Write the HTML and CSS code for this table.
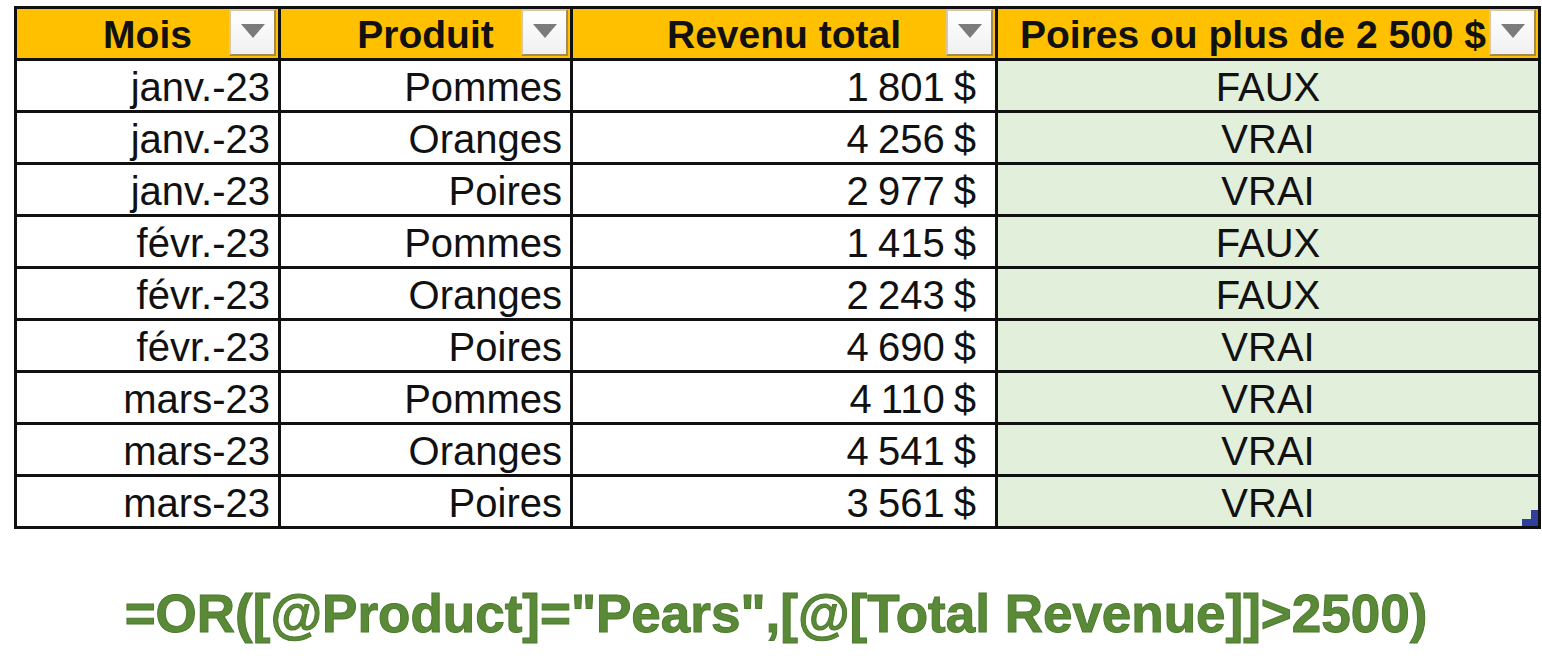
FILE: index.html
```html
<!DOCTYPE html>
<html lang="fr">
<head>
<meta charset="utf-8">
<title>Tableau</title>
<link rel="stylesheet" href="styles.css">
</head>
<body>
<div class="page">
  <table class="sheet">
    <colgroup>
      <col class="c-mois">
      <col class="c-prod">
      <col class="c-rev">
      <col class="c-test">
    </colgroup>
    <thead>
      <tr>
        <th><span class="htext">Mois</span><span class="dd"><i class="tri"></i></span></th>
        <th><span class="htext">Produit</span><span class="dd"><i class="tri"></i></span></th>
        <th><span class="htext">Revenu total</span><span class="dd"><i class="tri"></i></span></th>
        <th class="h-last"><span class="htext">Poires ou plus de 2 500 $</span><span class="dd"><i class="tri"></i></span></th>
      </tr>
    </thead>
    <tbody>
      <tr><td>janv.-23</td><td>Pommes</td><td class="money">1 801 $</td><td class="bool">FAUX</td></tr>
      <tr><td>janv.-23</td><td>Oranges</td><td class="money">4 256 $</td><td class="bool">VRAI</td></tr>
      <tr><td>janv.-23</td><td>Poires</td><td class="money">2 977 $</td><td class="bool">VRAI</td></tr>
      <tr><td>févr.-23</td><td>Pommes</td><td class="money">1 415 $</td><td class="bool">FAUX</td></tr>
      <tr><td>févr.-23</td><td>Oranges</td><td class="money">2 243 $</td><td class="bool">FAUX</td></tr>
      <tr><td>févr.-23</td><td>Poires</td><td class="money">4 690 $</td><td class="bool">VRAI</td></tr>
      <tr><td>mars-23</td><td>Pommes</td><td class="money">4 110 $</td><td class="bool">VRAI</td></tr>
      <tr><td>mars-23</td><td>Oranges</td><td class="money">4 541 $</td><td class="bool">VRAI</td></tr>
      <tr><td>mars-23</td><td>Poires</td><td class="money">3 561 $</td><td class="bool last">VRAI<svg class="handle" width="16" height="16" viewBox="0 0 16 16"><path d="M9 0H16V16H0V9H9Z" fill="#2f3f9e"/></svg></td></tr>
    </tbody>
  </table>
  <div class="formula">=OR([@Product]="Pears",[@[Total Revenue]]&gt;2500)</div>
</div>
</body>
</html>
```

FILE: styles.css
```css
html, body {
  margin: 0;
  padding: 0;
  background: #ffffff;
}

.page {
  padding: 6px 0 0 14px;
  font-family: "Liberation Sans", Arial, sans-serif;
  color: #111111;
}

.sheet {
  border-collapse: collapse;
  table-layout: fixed;
  width: 1524px;
  border: 3px solid #111111;
}

.c-mois { width: 264px; }
.c-prod { width: 292px; }
.c-rev { width: 425px; }
.c-test { width: 543px; }

.sheet th,
.sheet td {
  border: 3px solid #111111;
  padding: 0;
}

.sheet th {
  position: relative;
  height: 49px;
  background: #ffc000;
  font-weight: bold;
  font-size: 39px;
  text-align: center;
  white-space: nowrap;
  overflow: visible;
}

.htext {
  display: inline-block;
  line-height: 49px;
  position: relative;
  top: 1px;
}

.h-last .htext {
  margin-right: 30px;
}

.dd {
  position: absolute;
  right: 2px;
  top: 0;
  width: 47px;
  height: 47px;
  box-sizing: border-box;
  border: 2px solid #a48a4e;
  border-top-color: #d8c9a2;
  border-left-color: #d8c9a2;
  background: linear-gradient(#ffffff, #f0f0f0);
  display: flex;
  align-items: center;
  justify-content: center;
}

.tri {
  display: block;
  width: 0;
  height: 0;
  border-left: 12px solid transparent;
  border-right: 12px solid transparent;
  border-top: 14px solid #7b7b7b;
  margin-top: -3px;
}

.sheet td {
  height: 46px;
  padding-top: 3px;
  font-size: 40px;
  line-height: 46px;
  text-align: right;
  padding-right: 8px;
  white-space: nowrap;
  background: #ffffff;
}

.sheet td.money {
  padding-right: 19px;
  word-spacing: -2px;
}

.sheet td.bool {
  background: #e2efda;
  text-align: center;
  padding-right: 0;
}

.sheet td.last {
  position: relative;
}

.handle {
  position: absolute;
  right: 0;
  bottom: 0;
  display: block;
}

.formula {
  width: 1524px;
  margin-top: 55px;
  text-align: center;
  font-weight: bold;
  font-size: 53px;
  line-height: 60px;
  color: #5a8a38;
  -webkit-text-stroke: 1px #4b7a2c;
}
```
